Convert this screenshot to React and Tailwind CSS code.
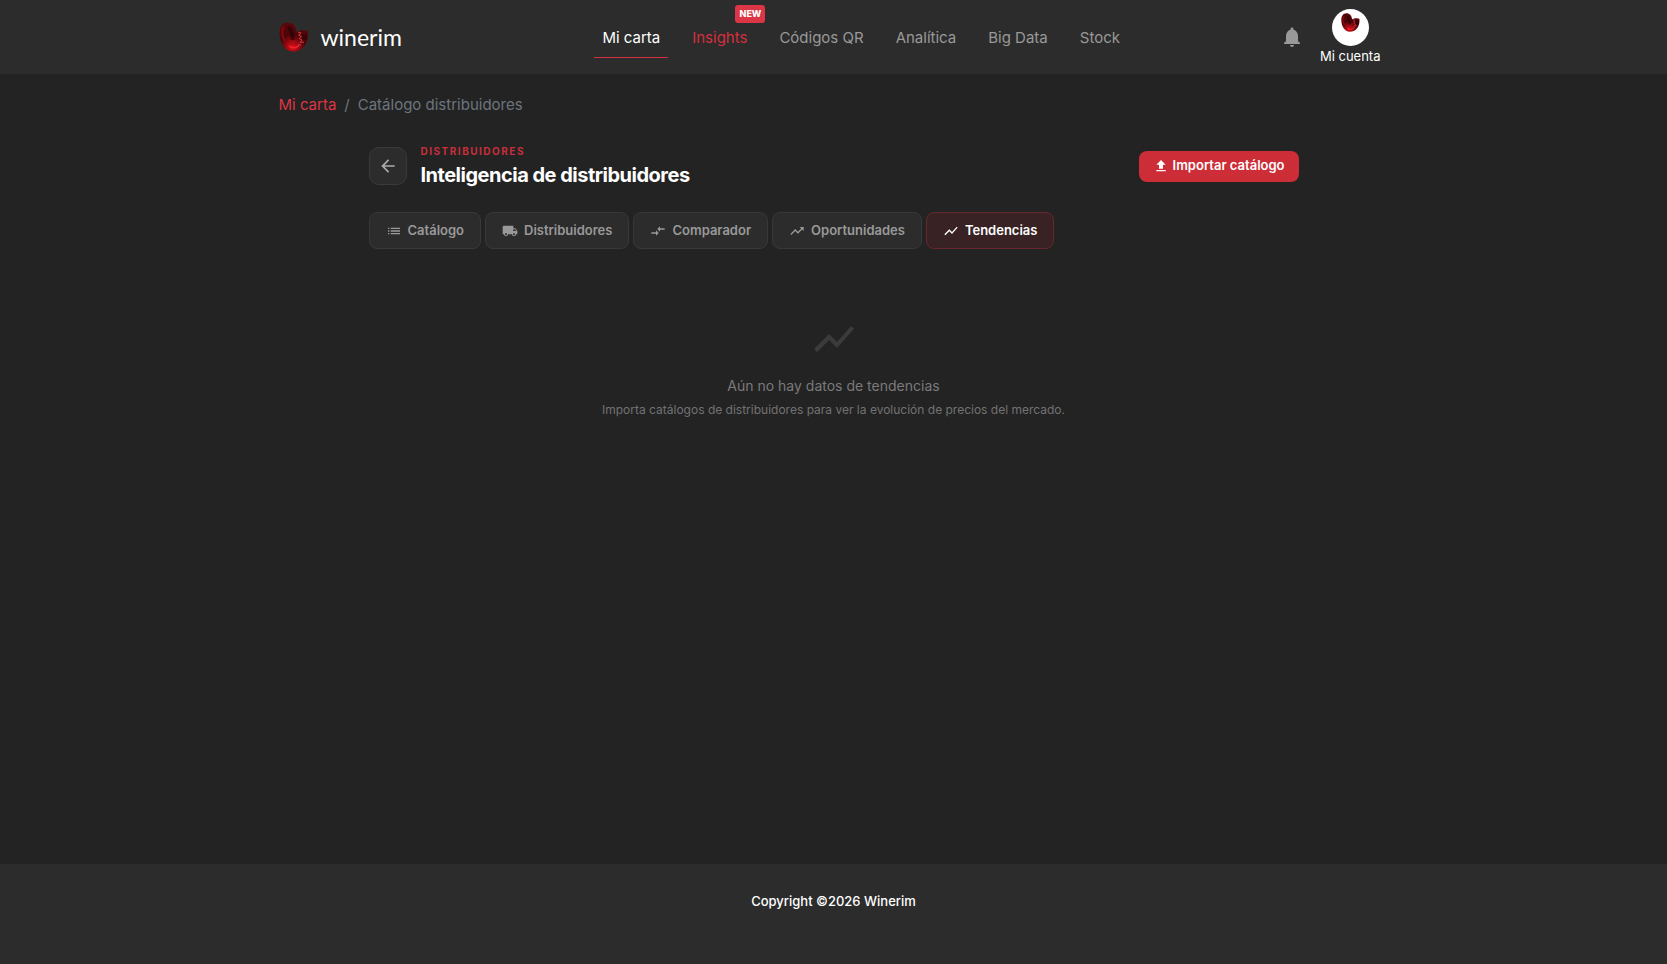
import React, { useState } from 'react';
import {
  MdArrowBack,
  MdCompareArrows,
  MdFileUpload,
  MdList,
  MdLocalShipping,
  MdNotifications,
  MdShowChart,
  MdTrendingUp
} from 'react-icons/md';

const navItems = [
  { label: 'Mi carta', active: true },
  { label: 'Insights', badge: 'NEW' },
  { label: 'Códigos QR' },
  { label: 'Analítica' },
  { label: 'Big Data' },
  { label: 'Stock' },
];

const tabs = [
  { id: 'catalogo', label: 'Catálogo', icon: MdList },
  { id: 'distribuidores', label: 'Distribuidores', icon: MdLocalShipping },
  { id: 'comparador', label: 'Comparador', icon: MdCompareArrows },
  { id: 'oportunidades', label: 'Oportunidades', icon: MdTrendingUp },
  { id: 'tendencias', label: 'Tendencias', icon: MdShowChart },
];

const HeartLogo = ({ className }) => (
  <svg viewBox="0 0 30 30" className={className} aria-hidden="true">
    <defs>
      <radialGradient id="wine" cx="0.45" cy="0.85" r="0.8">
        <stop offset="0" stopColor="#d80f18" />
        <stop offset="0.25" stopColor="#a00a12" />
        <stop offset="0.55" stopColor="#4a0508" />
        <stop offset="1" stopColor="#5a060a" />
      </radialGradient>
    </defs>
    <path d="M0.500 11C0.500 5 3.500 0.500 8.500 0.500C13.500 0.500 17 4 17.500 10C20 8 26 7.500 29 9C30.500 20 24 29.500 14 29.500C5.500 29.500 0.500 20 0.500 11Z" fill="url(#wine)" />
    <path d="M4.500 5C2.500 9 3 15 6 19" fill="none" stroke="#9a0c14" strokeWidth="2" opacity="0.7" />
    <path d="M9.500 5C13 8 13.500 13 14 18" fill="none" stroke="#210204" strokeWidth="4" opacity="0.6" />
    <path d="M23 12H28V18H24Z" fill="#2a0305" opacity="0.6" />
    <path d="M19 10L22 11L19.500 13L22.500 14.500L20 16.500L23 18L21 20.500L25 20M22 23.500L19 22" fill="none" stroke="#cf3a44" strokeWidth="1" />
    <path d="M10 24C13 26.500 17 26 20 23.500" fill="none" stroke="#ff2a30" strokeWidth="2" opacity="0.7" />
  </svg>
);

const App = () => {
  const [activeTab, setActiveTab] = useState('tendencias');

  return (
    <div className="flex min-h-screen flex-col bg-[#232323] font-['Inter',sans-serif] text-white">
      {/* Navbar */}
      <header className="bg-[#2c2c2c]">
        <div className="mx-auto flex h-[74px] max-w-[1140px] items-center px-[15px]">
          <a href="#" className="flex items-center gap-3">
            <HeartLogo className="h-[30px] w-[30px]" />
            <span className="font-['Lato',sans-serif] text-[23px] leading-8">winerim</span>
          </a>

          <nav className="mr-[148px] ml-auto flex items-center gap-4">
            {navItems.map((item) => (
              <a
                key={item.label}
                href="#"
                className={`relative border-b px-2 pt-[9px] pb-[7px] text-[15px] leading-6 ${item.active ? 'border-[#d42f3e] text-white' : item.badge ? 'border-transparent text-[#d42f3e]' : 'border-transparent text-[#999999]'}`}
              >
                {item.label}
                {item.badge && (
                  <span className="absolute -top-3 -right-2.5 rounded-[3px] bg-[#dc3545] px-1 text-[9px] leading-[18px] font-extrabold text-white">
                    {item.badge}
                  </span>
                )}
              </a>
            ))}
          </nav>

          <div className="flex items-center gap-3 pr-2">
            <button aria-label="Notificaciones" className="p-1">
              <MdNotifications className="h-6 w-6 text-[#999999]" />
            </button>
            <a href="#" className="flex flex-col items-center text-[13px] leading-5">
              <span className="flex h-[37px] w-[37px] justify-center rounded-full bg-white pt-1">
                <HeartLogo className="h-[19px] w-[19px]" />
              </span>
              Mi cuenta
            </a>
          </div>
        </div>
      </header>

      <main className="mx-auto w-full max-w-[1140px] flex-1 px-[15px] pt-[18px]">
        <nav aria-label="Ruta" className="flex gap-2 text-[15px] leading-[26px]">
          <a href="#" className="text-[#dc3545]">Mi carta</a>
          <span className="text-[#6c757d]">/</span>
          <span className="text-[#6c757d]">Catálogo distribuidores</span>
        </nav>

        <div className="mx-auto max-w-[930px] pt-6">
          {/* Page header */}
          <div className="flex items-center justify-between">
            <div className="flex items-center gap-3.5">
              <button aria-label="Volver" className="flex h-[38px] w-[38px] items-center justify-center rounded-[10px] border border-[#3a3a3a] bg-[#2c2c2c]">
                <MdArrowBack className="h-5 w-5 text-[#aaaaaa]" />
              </button>
              <div>
                <p className="text-[10px] leading-[18px] font-bold tracking-[1.5px] text-[#c82f3b] uppercase">Distribuidores</p>
                <h1 className="text-xl leading-[30px] font-bold tracking-tight">Inteligencia de distribuidores</h1>
              </div>
            </div>
            <button className="flex h-[31px] items-center gap-1 rounded-lg bg-[#cc2d37] px-3.5 text-[13px] font-semibold">
              <MdFileUpload className="h-4 w-4" />
              Importar catálogo
            </button>
          </div>

          {/* Tabs */}
          <div role="tablist" className="mt-[22px] flex gap-1">
            {tabs.map((tab) => (
              <button
                key={tab.id}
                role="tab"
                aria-selected={activeTab === tab.id}
                onClick={() => setActiveTab(tab.id)}
                className={`flex h-[37px] items-center gap-1.5 rounded-lg border px-4 text-[13px] font-semibold ${activeTab === tab.id ? 'border-[#66272d] bg-[#382224] text-white' : 'border-[#383838] bg-[#2c2c2c] text-[#999999]'}`}
              >
                <tab.icon className="h-4 w-4" />
                {tab.label}
              </button>
            ))}
          </div>

          {/* Empty state */}
          <div className="flex flex-col items-center pt-[66px] text-center">
            <MdShowChart className="h-12 w-12 text-[#3b3b3b]" />
            <p className="mt-[11px] text-sm leading-6 text-[#7a7a7a]">Aún no hay datos de tendencias</p>
            <p className="text-xs leading-6 text-[#727272]">Importa catálogos de distribuidores para ver la evolución de precios del mercado.</p>
          </div>
        </div>
      </main>

      <footer className="h-[100px] bg-[#2c2c2c] pt-[27px] text-center text-[13px] leading-5 font-medium">
        Copyright ©2026 Winerim
      </footer>
    </div>
  );
};

export default App;
